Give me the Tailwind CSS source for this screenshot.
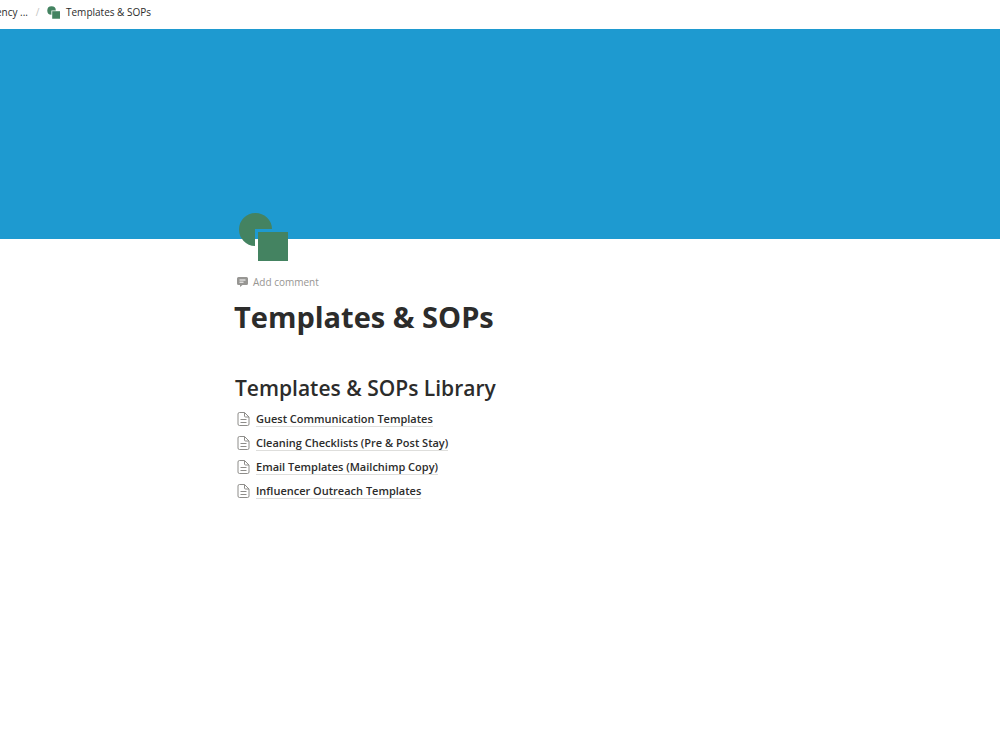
<!DOCTYPE html>
<html lang="en">
  <head>
    <meta charset="UTF-8" />
    <meta name="viewport" content="width=device-width, initial-scale=1.0" />
    <script src="https://cdn.jsdelivr.net/npm/@tailwindcss/browser@4"></script>
    <title>Templates &amp; SOPs</title>
  </head>
  <body class="bg-white text-[#2c2c2b] font-['Open_Sans','Noto_Sans',sans-serif]">
    <!-- Shared icons -->
    <svg class="hidden">
      <symbol id="icon-shapes" viewBox="0 0 50 50">
        <path d="M34 17 H17 V34 A16.500 16.500 0 1 1 34 17 Z" />
        <rect x="20" y="20" width="30" height="29" />
      </symbol>
      <symbol id="icon-page" viewBox="0 0 13 16">
        <path d="M2.500 1.500 H7.500 L12 6 V13 a1.500 1.500 0 0 1 -1.500 1.500 H2.500 a1.500 1.500 0 0 1 -1.500 -1.500 V3 a1.500 1.500 0 0 1 1.500 -1.500 Z M7.500 1.500 V5 a1 1 0 0 0 1 1 H12 M3.500 8.500 H9.500 M3.500 11.500 H9.500" />
      </symbol>
    </svg>

    <!-- Breadcrumb -->
    <nav class="flex h-[29px] items-center pb-[5px] text-[10px] leading-4">
      <a href="#" class="flex w-7 justify-end whitespace-nowrap">ency ...</a>
      <span class="w-[19px] text-center text-[#c4c4c2]">/</span>
      <a href="#" class="flex items-center gap-[6px]">
        <svg class="size-[13px] fill-[#448361]"><use href="#icon-shapes" /></svg>
        Templates &amp; SOPs
      </a>
    </nav>

    <!-- Cover -->
    <div class="h-[210px] bg-[#1e9ad0]"></div>

    <main class="pl-[234px] pr-6">
      <svg class="relative -mt-[27px] ml-1 size-[50px] fill-[#448361]"><use href="#icon-shapes" /></svg>

      <button type="button" class="mt-3 ml-[3px] flex items-center gap-[5px] text-[10px] leading-4 text-[#979693]">
        <svg class="h-[10px] w-[11px]" viewBox="0 0 11 10">
          <path fill="#979693" d="M1.500 0 h8 a1.500 1.500 0 0 1 1.500 1.500 v5 a1.500 1.500 0 0 1 -1.500 1.500 H5.500 L3 10 V8 H1.500 A1.500 1.500 0 0 1 0 6.500 v-5 A1.500 1.500 0 0 1 1.500 0 Z" />
          <path stroke="#fff" d="M2.500 3 h6 M2.500 5.200 h4" />
        </svg>
        Add comment
      </button>

      <h1 class="mt-[9px] text-[29px] leading-9 font-bold">Templates &amp; SOPs</h1>

      <h2 class="mt-[37px] ml-px text-[21px] leading-8 font-semibold">Templates &amp; SOPs Library</h2>

      <ul class="mt-[3px] ml-[3px] text-[11px] leading-[14px] font-semibold">
        <li class="flex h-6 items-center gap-[6px]">
          <svg class="h-4 w-[13px] fill-none stroke-[#8e8d8a]"><use href="#icon-page" /></svg>
          <a href="#" class="border-b border-[#dededc]">Guest Communication Templates</a>
        </li>
        <li class="flex h-6 items-center gap-[6px]">
          <svg class="h-4 w-[13px] fill-none stroke-[#8e8d8a]"><use href="#icon-page" /></svg>
          <a href="#" class="border-b border-[#dededc]">Cleaning Checklists (Pre &amp; Post Stay)</a>
        </li>
        <li class="flex h-6 items-center gap-[6px]">
          <svg class="h-4 w-[13px] fill-none stroke-[#8e8d8a]"><use href="#icon-page" /></svg>
          <a href="#" class="border-b border-[#dededc]">Email Templates (Mailchimp Copy)</a>
        </li>
        <li class="flex h-6 items-center gap-[6px]">
          <svg class="h-4 w-[13px] fill-none stroke-[#8e8d8a]"><use href="#icon-page" /></svg>
          <a href="#" class="border-b border-[#dededc]">Influencer Outreach Templates</a>
        </li>
      </ul>
    </main>
  </body>
</html>
